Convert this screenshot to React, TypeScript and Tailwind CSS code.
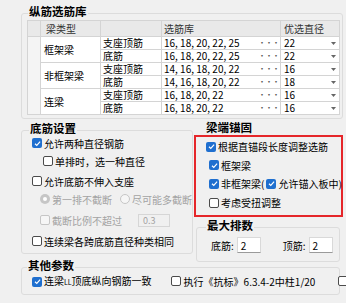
import type { ReactNode } from 'react'

const cjk = "font-['Noto_Sans_CJK_SC','Microsoft_YaHei',sans-serif]"

function Check({ checked = false, disabled = false }: { checked?: boolean; disabled?: boolean }) {
  if (checked) {
    return (
      <span className="inline-flex h-[10px] w-[10px] shrink-0 items-center justify-center rounded-[2px] bg-[#1f6fcf]">
        <svg viewBox="0 0 10 10" className="h-[9px] w-[9px]">
          <path d="M2.2 5.3 L4.2 7.2 L7.9 3" fill="none" stroke="white" strokeWidth="1.3" />
        </svg>
      </span>
    )
  }
  return (
    <span
      className={`inline-block h-[10px] w-[10px] shrink-0 rounded-[2px] border ${
        disabled ? 'border-[#c6c6c6] bg-[#f6f6f6]' : 'border-[#4b4b4b] bg-white'
      }`}
    />
  )
}

function Radio({ checked = false }: { checked?: boolean }) {
  if (checked) {
    return (
      <span className="inline-flex h-[10px] w-[10px] shrink-0 items-center justify-center rounded-full bg-[#c6c6c6]">
        <span className="h-[4px] w-[4px] rounded-full bg-white" />
      </span>
    )
  }
  return <span className="inline-block h-[10px] w-[10px] shrink-0 rounded-full border border-[#c6c6c6] bg-[#f6f6f6]" />
}

function Group({ title, className = '', titleLeft = 'left-[6px]', children }: { title: string; className?: string; titleLeft?: string; children?: ReactNode }) {
  return (
    <div className={`relative rounded-[3px] border border-[#dcdcdc] ${className}`}>
      <span className={`absolute -top-[10px] ${titleLeft} bg-[#f0f0f0] px-[1px] text-[11.5px] font-bold leading-[14px]`}>{title}</span>
      {children}
    </div>
  )
}

const groups = [
  {
    type: '框架梁',
    items: [
      ['支座顶筋', '16, 18, 20, 22, 25', '22'],
      ['底筋', '16, 18, 20, 22, 25', '22'],
    ],
  },
  {
    type: '非框架梁',
    items: [
      ['支座顶筋', '14, 16, 18, 20, 22', '16'],
      ['底筋', '14, 16, 18, 20, 22', '18'],
    ],
  },
  {
    type: '连梁',
    items: [
      ['支座顶筋', '16, 18, 20, 22', '16'],
      ['底筋', '16, 18, 20, 22', '16'],
    ],
  },
]

function BarTable() {
  return (
    <table className="w-[312px] table-fixed border-collapse bg-white text-[10px] leading-[12px]">
      <colgroup>
        <col className="w-[13px]" />
        <col className="w-[60px]" />
        <col className="w-[61px]" />
        <col className="w-[119px]" />
        <col className="w-[59px]" />
      </colgroup>
      <thead>
        <tr className="h-[16px] bg-[#e9e9e9] text-[#333]">
          <th className="border border-[#d4d4d4] p-0" />
          <th className="border border-[#d4d4d4] pl-[5px] text-left font-normal">梁类型</th>
          <th className="border border-[#d4d4d4] p-0" />
          <th className="border border-[#d4d4d4] pl-[2px] text-left font-normal">选筋库</th>
          <th className="border border-[#d4d4d4] pl-[3px] text-left font-normal">优选直径</th>
        </tr>
      </thead>
      <tbody>
        {groups.map((g, gi) =>
          g.items.map((it, ii) => (
            <tr key={g.type + ii} className="h-[13px]">
              {gi === 0 && ii === 0 && <td rowSpan={6} className="border border-[#d4d4d4] bg-[#f4f4f4] p-0" />}
              {ii === 0 && (
                <td rowSpan={2} className="border border-[#d4d4d4] pl-[3px]">
                  {g.type}
                </td>
              )}
              <td className="border border-[#d4d4d4] pl-[2px]">{it[0]}</td>
              <td className="border border-[#d4d4d4] pl-[2px]">
                <div className="flex items-center justify-between pr-[1px]">
                  <span>{it[1]}</span>
                  <span className="text-[8px] tracking-[-1px] text-[#555]">···</span>
                </div>
              </td>
              <td className="border border-[#d4d4d4] pl-[3px]">
                <div className="flex items-center justify-between pr-[3px]">
                  <span>{it[2]}</span>
                  <svg viewBox="0 0 5 3" className="h-[3px] w-[5px]">
                    <path d="M0 0 H5 L2.5 3 Z" fill="#666" />
                  </svg>
                </div>
              </td>
            </tr>
          ))
        )}
      </tbody>
    </table>
  )
}

function Row({ children, className = '' }: { children: ReactNode; className?: string }) {
  return <div className={`flex h-[18px] items-center gap-[2px] ${className}`}>{children}</div>
}

export default function App() {
  return (
    <div className={`h-[303px] w-[346px] overflow-hidden bg-[#f0f0f0] text-[10px] leading-[13px] text-black ${cjk}`}>
      <div className="pl-[21px] pr-[3px] pt-[13px]">
        <Group title="纵筋选筋库" className="h-[106px] px-[5px] pt-[6px]">
          <BarTable />
        </Group>

        <div className="flex">
          <div className="mt-[11px] w-[172px] shrink-0">
            <Group title="底筋设置" titleLeft="left-[7px]" className="h-[124px] pl-[10px] pt-[3px]">
              <Row>
                <Check checked />
                <span>允许两种直径钢筋</span>
              </Row>
              <Row className="pl-[11px]">
                <Check />
                <span>单排时，选一种直径</span>
              </Row>
              <Row className="mt-[2px]">
                <Check />
                <span>允许底筋不伸入支座</span>
              </Row>
              <Row className="whitespace-nowrap pl-[8px] text-[#a3a3a3]">
                <Radio checked />
                <span>第一排不截断</span>
                <span className="ml-[6px]">
                  <Radio />
                </span>
                <span>尽可能多截断</span>
              </Row>
              <Row className="mt-[3px] pl-[8px] text-[#a3a3a3]">
                <Check disabled />
                <span>截断比例不超过</span>
                <span className="ml-[14px] flex h-[13px] w-[32px] items-center border border-[#d6d6d6] bg-[#f0f0f0] pl-[4px] text-[9px]">0.3</span>
              </Row>
              <Row className="mt-[3px] whitespace-nowrap">
                <Check />
                <span>连续梁各跨底筋直径种类相同</span>
              </Row>
            </Group>
          </div>

          <div className="ml-[1px] flex w-[149px] shrink-0 flex-col">
            <div className="h-[16px] pl-[12px] text-[11.5px] font-bold leading-[16px]">梁端锚固</div>
            <div className="h-[82px] border-2 border-[#e5262a] pl-[10px]">
              <Row className="h-[19px]">
                <Check checked />
                <span>根据直锚段长度调整选筋</span>
              </Row>
              <Row className="h-[18px] pl-[3px]">
                <Check checked />
                <span>框架梁</span>
              </Row>
              <Row className="h-[19px] whitespace-nowrap pl-[3px]">
                <Check checked />
                <span>非框架梁(</span>
                <Check checked />
                <span>允许锚入板中)</span>
              </Row>
              <Row className="h-[19px] pl-[3px]">
                <Check />
                <span>考虑受扭调整</span>
              </Row>
            </div>
            <Group title="最大排数" titleLeft="left-[9px]" className="ml-[2px] mt-[10px] h-[35px] w-[144px] pl-[14px] pt-[9px]">
              <div className="flex items-center">
                <span>底筋:</span>
                <span className="ml-[3px] flex h-[16px] w-[24px] items-center border border-[#d9d9d9] border-b-[#9a9a9a] bg-white pl-[3px]">2</span>
                <span className="ml-[22px]">顶筋:</span>
                <span className="ml-[3px] flex h-[16px] w-[24px] items-center border border-[#d9d9d9] border-b-[#9a9a9a] bg-white pl-[3px]">2</span>
              </div>
            </Group>
          </div>
        </div>

        <Group title="其他参数" titleLeft="left-[5px]" className="mt-[5px] h-[28px] w-[319px] pl-[10px] pt-[6px]">
          <div className="flex items-center whitespace-nowrap">
            <Check checked />
            <span className="ml-[2px]">
              连梁<span className="text-[7px]">LL</span>顶底纵向钢筋一致
            </span>
            <span className="ml-[19px]">
              <Check />
            </span>
            <span className="ml-[3px]">执行《抗标》6.3.4-2中柱1/20</span>
            <span className="ml-[23px]">
              <Check />
            </span>
            <span className="ml-[2px]">轴压比</span>
          </div>
        </Group>
      </div>
    </div>
  )
}
